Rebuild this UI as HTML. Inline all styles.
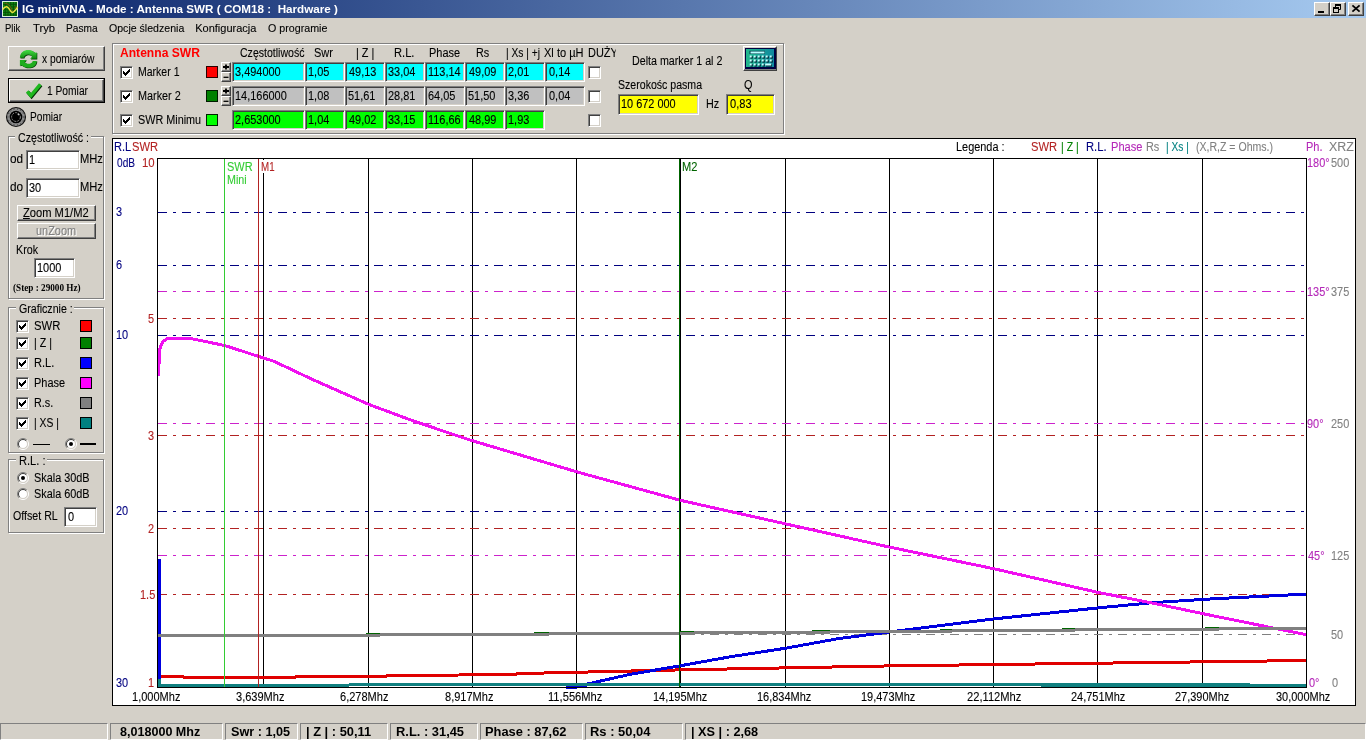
<!DOCTYPE html>
<html lang="pl"><head><meta charset="utf-8"><title>IG miniVNA - Mode : Antenna SWR</title>
<style>
html,body{margin:0;padding:0}
body{width:1366px;height:740px;background:#d4d0c8;position:relative;overflow:hidden;font-family:"Liberation Sans",sans-serif;font-size:12.3px;color:#000}
div,svg{position:absolute;box-sizing:border-box}
.tx{white-space:pre;line-height:16px;height:16px;transform-origin:0 0;-webkit-text-stroke:.1px currentColor}
.b{-webkit-text-stroke:0}
#title{left:0;top:0;width:1366px;height:18px;background:linear-gradient(to right,#0a246a,#a6caf0)}
.rs{background:#d4d0c8;border:1px solid;border-color:#fff #404040 #404040 #fff;box-shadow:inset -1px -1px 0 #808080,inset 1px 1px 0 #d4d0c8}
.sk{border:1px solid;border-color:#808080 #fff #fff #808080;box-shadow:inset 1px 1px 0 #404040,inset -1px -1px 0 #d4d0c8;background:#fff}
.gb{border:1px solid #808080;box-shadow:1px 1px 0 #fff,inset 1px 1px 0 #fff}
.sq{border:1px solid #000;width:12px;height:12px}
.sp{background:#d4d0c8;border:1px solid;border-color:#fff #404040 #404040 #fff;box-shadow:inset -1px -1px 0 #808080;width:10px;height:10px}
.st{top:723px;height:17px;border:1px solid;border-color:#808080 #fff #fff #808080}
</style></head><body>

<div id="title"></div>
<svg style="left:2px;top:1px" width="16" height="16" viewBox="0 0 16 16"><rect x="0" y="0" width="16" height="16" fill="#118a11"/><path d="M3.300 1V15M6 1V15M8.700 1V15M11.400 1V15M14 1V15M1 3.300H15M1 6H15M1 8.700H15M1 11.400H15M1 14H15" stroke="#075207" stroke-width="1"/><rect x=".5" y=".5" width="15" height="15" fill="none" stroke="#d8f0d8"/><path d="M2.200 2.200C5 2 7 3.500 8.500 6S10 10 10.600 10.600M12.800 7.200L14.600 5" fill="none" stroke="#7a5a10" stroke-width="1.100" opacity=".8"/><path d="M.6 8.600C2 6.200 3.300 5.500 4.800 5.700C7 6.200 8 10.500 10 11.400C11.600 12 13.600 9 15.600 6.200" fill="none" stroke="#e8e040" stroke-width="1.500"/></svg>
<div class="rs" style="left:1314px;top:2px;width:16px;height:14px"><svg style="left:0;top:0" width="14" height="12" viewBox="0 0 14 12"><rect x="3" y="8" width="6" height="2" fill="#000"/></svg></div>
<div class="rs" style="left:1330px;top:2px;width:16px;height:14px"><svg style="left:0;top:0" width="14" height="12" viewBox="0 0 14 12"><path d="M4.500 1.500h5v5h-5z" fill="none" stroke="#000"/><rect x="4" y="1" width="6" height="2" fill="#000"/><rect x="2.500" y="4.500" width="5" height="5" fill="#d4d0c8" stroke="#000"/><rect x="2" y="4" width="6" height="2" fill="#000"/></svg></div>
<div class="rs" style="left:1348px;top:2px;width:16px;height:14px"><svg style="left:0;top:0" width="14" height="12" viewBox="0 0 14 12"><path d="M3.400 2.300L10.600 8.700M10.600 2.300L3.400 8.700" stroke="#000" stroke-width="1.800" fill="none"/></svg></div>
<div class="rs" style="left:8px;top:46px;width:97px;height:25px"></div>
<div style="left:8px;top:78px;width:97px;height:25px;border:1px solid #000"><div class="rs" style="left:0;top:0;width:95px;height:23px"></div></div>
<svg style="left:16px;top:47px" width="26" height="24" viewBox="0 0 26 24"><defs><linearGradient id="gg" x1="0" y1="0" x2="0" y2="1"><stop offset="0" stop-color="#44dc44"/><stop offset="1" stop-color="#0f8a0f"/></linearGradient><path id="ra" d="M3.900 10.700C3.900 5.500 8 2.900 12.300 2.900C15 2.900 17.500 4 19 5.800L20.700 5.200V11.700H14.200L16.200 9.500C15.200 8.200 13.800 7.450 12.300 7.450C10 7.450 8 8.800 7.900 10.700Z"/></defs><use href="#ra" transform="translate(.6 .7)" fill="#063806"/><use href="#ra" fill="url(#gg)"/><g transform="translate(0 13) scale(1 .88) translate(0 -13)"><use href="#ra" transform="rotate(180 12.300 12.350) translate(-.6 -.7)" fill="#063806"/><use href="#ra" transform="rotate(180 12.300 12.350)" fill="#1fae1f"/></g></svg>
<svg style="left:20px;top:78px" width="26" height="24" viewBox="0 0 26 24"><path d="M7.200 13.300L10.900 17.600L20.300 6.400" fill="none" stroke="#052f05" stroke-width="3.600" transform="translate(.7 .8)"/><path d="M7.200 13.300L10.900 17.600L20.300 6.400" fill="none" stroke="#1fb81f" stroke-width="3.400"/></svg>
<svg style="left:5px;top:106px" width="22" height="22" viewBox="0 0 22 22"><circle cx="11" cy="11" r="9.500" fill="#8c8c8c" stroke="#111" stroke-width="1.100"/><circle cx="11" cy="11" r="8" fill="none" stroke="#222" stroke-width=".8" stroke-dasharray="1 2.500"/><circle cx="11" cy="11" r="6.300" fill="#000"/><circle cx="11" cy="11" r="4.400" fill="none" stroke="#8a8a8a" stroke-width="1" stroke-dasharray="2.200 1"/><ellipse cx="13.400" cy="8.500" rx="1.100" ry=".6" transform="rotate(40 13.400 8.500)" fill="#ccc"/></svg>
<div class="gb" style="left:8px;top:136px;width:96px;height:163px"></div>
<div class="gb" style="left:8px;top:307px;width:96px;height:146px"></div>
<div class="gb" style="left:8px;top:459px;width:96px;height:74px"></div>
<div class="sk" style="left:26px;top:150px;width:54px;height:20px"></div>
<div class="sk" style="left:26px;top:178px;width:54px;height:20px"></div>
<div class="rs" style="left:17px;top:205px;width:79px;height:16px"></div>
<div class="rs" style="left:17px;top:223px;width:79px;height:16px"></div>
<div class="sk" style="left:34px;top:258px;width:41px;height:20px"></div>
<div class="sk" style="left:64px;top:507px;width:33px;height:20px"></div>
<div class="sk" style="left:16px;top:320px;width:13px;height:13px"><svg style="left:0;top:0" width="11" height="11" viewBox="0 0 11 11" shape-rendering="crispEdges"><rect x="2" y="4" width="1" height="3" fill="#000"/><rect x="3" y="5" width="1" height="3" fill="#000"/><rect x="4" y="6" width="1" height="3" fill="#000"/><rect x="5" y="5" width="1" height="3" fill="#000"/><rect x="6" y="4" width="1" height="3" fill="#000"/><rect x="7" y="3" width="1" height="3" fill="#000"/><rect x="8" y="2" width="1" height="3" fill="#000"/></svg></div>
<div class="sq" style="left:80px;top:320px;background:#ff0000"></div>
<div class="sk" style="left:16px;top:337px;width:13px;height:13px"><svg style="left:0;top:0" width="11" height="11" viewBox="0 0 11 11" shape-rendering="crispEdges"><rect x="2" y="4" width="1" height="3" fill="#000"/><rect x="3" y="5" width="1" height="3" fill="#000"/><rect x="4" y="6" width="1" height="3" fill="#000"/><rect x="5" y="5" width="1" height="3" fill="#000"/><rect x="6" y="4" width="1" height="3" fill="#000"/><rect x="7" y="3" width="1" height="3" fill="#000"/><rect x="8" y="2" width="1" height="3" fill="#000"/></svg></div>
<div class="sq" style="left:80px;top:337px;background:#008000"></div>
<div class="sk" style="left:16px;top:357px;width:13px;height:13px"><svg style="left:0;top:0" width="11" height="11" viewBox="0 0 11 11" shape-rendering="crispEdges"><rect x="2" y="4" width="1" height="3" fill="#000"/><rect x="3" y="5" width="1" height="3" fill="#000"/><rect x="4" y="6" width="1" height="3" fill="#000"/><rect x="5" y="5" width="1" height="3" fill="#000"/><rect x="6" y="4" width="1" height="3" fill="#000"/><rect x="7" y="3" width="1" height="3" fill="#000"/><rect x="8" y="2" width="1" height="3" fill="#000"/></svg></div>
<div class="sq" style="left:80px;top:357px;background:#0000ff"></div>
<div class="sk" style="left:16px;top:377px;width:13px;height:13px"><svg style="left:0;top:0" width="11" height="11" viewBox="0 0 11 11" shape-rendering="crispEdges"><rect x="2" y="4" width="1" height="3" fill="#000"/><rect x="3" y="5" width="1" height="3" fill="#000"/><rect x="4" y="6" width="1" height="3" fill="#000"/><rect x="5" y="5" width="1" height="3" fill="#000"/><rect x="6" y="4" width="1" height="3" fill="#000"/><rect x="7" y="3" width="1" height="3" fill="#000"/><rect x="8" y="2" width="1" height="3" fill="#000"/></svg></div>
<div class="sq" style="left:80px;top:377px;background:#ff00ff"></div>
<div class="sk" style="left:16px;top:397px;width:13px;height:13px"><svg style="left:0;top:0" width="11" height="11" viewBox="0 0 11 11" shape-rendering="crispEdges"><rect x="2" y="4" width="1" height="3" fill="#000"/><rect x="3" y="5" width="1" height="3" fill="#000"/><rect x="4" y="6" width="1" height="3" fill="#000"/><rect x="5" y="5" width="1" height="3" fill="#000"/><rect x="6" y="4" width="1" height="3" fill="#000"/><rect x="7" y="3" width="1" height="3" fill="#000"/><rect x="8" y="2" width="1" height="3" fill="#000"/></svg></div>
<div class="sq" style="left:80px;top:397px;background:#808080"></div>
<div class="sk" style="left:16px;top:417px;width:13px;height:13px"><svg style="left:0;top:0" width="11" height="11" viewBox="0 0 11 11" shape-rendering="crispEdges"><rect x="2" y="4" width="1" height="3" fill="#000"/><rect x="3" y="5" width="1" height="3" fill="#000"/><rect x="4" y="6" width="1" height="3" fill="#000"/><rect x="5" y="5" width="1" height="3" fill="#000"/><rect x="6" y="4" width="1" height="3" fill="#000"/><rect x="7" y="3" width="1" height="3" fill="#000"/><rect x="8" y="2" width="1" height="3" fill="#000"/></svg></div>
<div class="sq" style="left:80px;top:417px;background:#008080"></div>
<svg style="left:17px;top:438px" width="12" height="12" viewBox="0 0 12 12"><circle cx="6" cy="6" r="4.300" fill="#fff"/><path d="M9.900 2.100A5.500 5.500 0 0 0 2.100 9.900" fill="none" stroke="#808080" stroke-width="1"/><path d="M2.100 9.900A5.500 5.500 0 0 0 9.900 2.100" fill="none" stroke="#fff" stroke-width="1"/><path d="M9.200 2.800A4.500 4.500 0 0 0 2.800 9.200" fill="none" stroke="#404040" stroke-width="1"/><path d="M2.800 9.200A4.500 4.500 0 0 0 9.200 2.800" fill="none" stroke="#d4d0c8" stroke-width="1"/></svg>
<svg style="left:65px;top:438px" width="12" height="12" viewBox="0 0 12 12"><circle cx="6" cy="6" r="4.300" fill="#fff"/><path d="M9.900 2.100A5.500 5.500 0 0 0 2.100 9.900" fill="none" stroke="#808080" stroke-width="1"/><path d="M2.100 9.900A5.500 5.500 0 0 0 9.900 2.100" fill="none" stroke="#fff" stroke-width="1"/><path d="M9.200 2.800A4.500 4.500 0 0 0 2.800 9.200" fill="none" stroke="#404040" stroke-width="1"/><path d="M2.800 9.200A4.500 4.500 0 0 0 9.200 2.800" fill="none" stroke="#d4d0c8" stroke-width="1"/><circle cx="6" cy="6" r="2" fill="#000"/></svg>
<div style="left:33px;top:444px;width:17px;height:1px;background:#000"></div>
<div style="left:80px;top:443px;width:16px;height:2px;background:#000"></div>
<svg style="left:17px;top:472px" width="12" height="12" viewBox="0 0 12 12"><circle cx="6" cy="6" r="4.300" fill="#fff"/><path d="M9.900 2.100A5.500 5.500 0 0 0 2.100 9.900" fill="none" stroke="#808080" stroke-width="1"/><path d="M2.100 9.900A5.500 5.500 0 0 0 9.900 2.100" fill="none" stroke="#fff" stroke-width="1"/><path d="M9.200 2.800A4.500 4.500 0 0 0 2.800 9.200" fill="none" stroke="#404040" stroke-width="1"/><path d="M2.800 9.200A4.500 4.500 0 0 0 9.200 2.800" fill="none" stroke="#d4d0c8" stroke-width="1"/><circle cx="6" cy="6" r="2" fill="#000"/></svg>
<svg style="left:17px;top:488px" width="12" height="12" viewBox="0 0 12 12"><circle cx="6" cy="6" r="4.300" fill="#fff"/><path d="M9.900 2.100A5.500 5.500 0 0 0 2.100 9.900" fill="none" stroke="#808080" stroke-width="1"/><path d="M2.100 9.900A5.500 5.500 0 0 0 9.900 2.100" fill="none" stroke="#fff" stroke-width="1"/><path d="M9.200 2.800A4.500 4.500 0 0 0 2.800 9.200" fill="none" stroke="#404040" stroke-width="1"/><path d="M2.800 9.200A4.500 4.500 0 0 0 9.200 2.800" fill="none" stroke="#d4d0c8" stroke-width="1"/></svg>
<div class="gb" style="left:112px;top:43px;width:672px;height:91px"></div>
<div class="sk" style="left:120px;top:66px;width:13px;height:13px"><svg style="left:0;top:0" width="11" height="11" viewBox="0 0 11 11" shape-rendering="crispEdges"><rect x="2" y="4" width="1" height="3" fill="#000"/><rect x="3" y="5" width="1" height="3" fill="#000"/><rect x="4" y="6" width="1" height="3" fill="#000"/><rect x="5" y="5" width="1" height="3" fill="#000"/><rect x="6" y="4" width="1" height="3" fill="#000"/><rect x="7" y="3" width="1" height="3" fill="#000"/><rect x="8" y="2" width="1" height="3" fill="#000"/></svg></div>
<div class="sk" style="left:588px;top:66px;width:13px;height:13px"></div>
<div class="sk" style="left:120px;top:90px;width:13px;height:13px"><svg style="left:0;top:0" width="11" height="11" viewBox="0 0 11 11" shape-rendering="crispEdges"><rect x="2" y="4" width="1" height="3" fill="#000"/><rect x="3" y="5" width="1" height="3" fill="#000"/><rect x="4" y="6" width="1" height="3" fill="#000"/><rect x="5" y="5" width="1" height="3" fill="#000"/><rect x="6" y="4" width="1" height="3" fill="#000"/><rect x="7" y="3" width="1" height="3" fill="#000"/><rect x="8" y="2" width="1" height="3" fill="#000"/></svg></div>
<div class="sk" style="left:588px;top:90px;width:13px;height:13px"></div>
<div class="sk" style="left:120px;top:114px;width:13px;height:13px"><svg style="left:0;top:0" width="11" height="11" viewBox="0 0 11 11" shape-rendering="crispEdges"><rect x="2" y="4" width="1" height="3" fill="#000"/><rect x="3" y="5" width="1" height="3" fill="#000"/><rect x="4" y="6" width="1" height="3" fill="#000"/><rect x="5" y="5" width="1" height="3" fill="#000"/><rect x="6" y="4" width="1" height="3" fill="#000"/><rect x="7" y="3" width="1" height="3" fill="#000"/><rect x="8" y="2" width="1" height="3" fill="#000"/></svg></div>
<div class="sk" style="left:588px;top:114px;width:13px;height:13px"></div>
<div class="sq" style="left:206px;top:66px;background:#ff0000;border-color:#2a0000"></div>
<div class="sq" style="left:206px;top:90px;background:#008000;border-color:#001a00"></div>
<div class="sq" style="left:206px;top:114px;background:#00ff00;border-color:#002000"></div>
<div class="sp" style="left:221px;top:62px"><svg style="left:0;top:0" width="8" height="8"><path d="M1 4h6M4 1.500v5" stroke="#000" stroke-width="1.800"/></svg></div>
<div class="sp" style="left:221px;top:72px"><svg style="left:0;top:0" width="8" height="8"><path d="M1.500 4.300h5" stroke="#000" stroke-width="1.300"/></svg></div>
<div class="sp" style="left:221px;top:86px"><svg style="left:0;top:0" width="8" height="8"><path d="M1 4h6M4 1.500v5" stroke="#000" stroke-width="1.800"/></svg></div>
<div class="sp" style="left:221px;top:96px"><svg style="left:0;top:0" width="8" height="8"><path d="M1.500 4.300h5" stroke="#000" stroke-width="1.300"/></svg></div>
<div class="sk" style="left:232px;top:62px;width:73px;height:20px;background:#00ffff"></div>
<div class="sk" style="left:305px;top:62px;width:40px;height:20px;background:#00ffff"></div>
<div class="sk" style="left:345px;top:62px;width:40px;height:20px;background:#00ffff"></div>
<div class="sk" style="left:385px;top:62px;width:40px;height:20px;background:#00ffff"></div>
<div class="sk" style="left:425px;top:62px;width:40px;height:20px;background:#00ffff"></div>
<div class="sk" style="left:465px;top:62px;width:40px;height:20px;background:#00ffff"></div>
<div class="sk" style="left:505px;top:62px;width:40px;height:20px;background:#00ffff"></div>
<div class="sk" style="left:545px;top:62px;width:40px;height:20px;background:#00ffff"></div>
<div class="sk" style="left:232px;top:86px;width:73px;height:20px;background:#c0c0c0"></div>
<div class="sk" style="left:305px;top:86px;width:40px;height:20px;background:#c0c0c0"></div>
<div class="sk" style="left:345px;top:86px;width:40px;height:20px;background:#c0c0c0"></div>
<div class="sk" style="left:385px;top:86px;width:40px;height:20px;background:#c0c0c0"></div>
<div class="sk" style="left:425px;top:86px;width:40px;height:20px;background:#c0c0c0"></div>
<div class="sk" style="left:465px;top:86px;width:40px;height:20px;background:#c0c0c0"></div>
<div class="sk" style="left:505px;top:86px;width:40px;height:20px;background:#c0c0c0"></div>
<div class="sk" style="left:545px;top:86px;width:40px;height:20px;background:#c0c0c0"></div>
<div class="sk" style="left:232px;top:110px;width:73px;height:20px;background:#00ff00"></div>
<div class="sk" style="left:305px;top:110px;width:40px;height:20px;background:#00ff00"></div>
<div class="sk" style="left:345px;top:110px;width:40px;height:20px;background:#00ff00"></div>
<div class="sk" style="left:385px;top:110px;width:40px;height:20px;background:#00ff00"></div>
<div class="sk" style="left:425px;top:110px;width:40px;height:20px;background:#00ff00"></div>
<div class="sk" style="left:465px;top:110px;width:40px;height:20px;background:#00ff00"></div>
<div class="sk" style="left:505px;top:110px;width:40px;height:20px;background:#00ff00"></div>
<div class="sk" style="left:618px;top:94px;width:81px;height:21px;background:#ffff00"></div>
<div class="sk" style="left:726px;top:94px;width:49px;height:21px;background:#ffff00"></div>
<div class="rs" style="left:743px;top:46px;width:34px;height:25px"></div>
<svg style="left:745px;top:48px" width="31" height="21" viewBox="0 0 31 21"><defs><linearGradient id="cg" x1="0" y1="0" x2="1" y2="0"><stop offset="0" stop-color="#22b88c"/><stop offset="1" stop-color="#0f88a0"/></linearGradient></defs><rect x="0" y="0" width="31" height="21" fill="#000040"/><rect x="1" y="1" width="28" height="18" fill="url(#cg)"/><rect x="4.500" y="2.800" width="15.500" height="3.200" fill="#003848"/><rect x="5.500" y="3.500" width="14" height="2" fill="#b8ffff"/><rect x="5.5" y="8.3" width="2.300" height="2.300" fill="#002838"/><rect x="4.7" y="7.5" width="2" height="2" fill="#c8ffff"/><rect x="9.5" y="8.3" width="2.300" height="2.300" fill="#002838"/><rect x="8.7" y="7.5" width="2" height="2" fill="#c8ffff"/><rect x="13.5" y="8.3" width="2.300" height="2.300" fill="#002838"/><rect x="12.7" y="7.5" width="2" height="2" fill="#c8ffff"/><rect x="17.5" y="8.3" width="2.300" height="2.300" fill="#002838"/><rect x="16.7" y="7.5" width="2" height="2" fill="#c8ffff"/><rect x="21.5" y="8.3" width="2.300" height="2.300" fill="#002838"/><rect x="20.7" y="7.5" width="2" height="2" fill="#c8ffff"/><rect x="25.5" y="8.3" width="2.300" height="2.300" fill="#002838"/><rect x="24.7" y="7.5" width="2" height="2" fill="#c8ffff"/><rect x="5.5" y="12.3" width="2.300" height="2.300" fill="#002838"/><rect x="4.7" y="11.5" width="2" height="2" fill="#c8ffff"/><rect x="9.5" y="12.3" width="2.300" height="2.300" fill="#002838"/><rect x="8.7" y="11.5" width="2" height="2" fill="#c8ffff"/><rect x="13.5" y="12.3" width="2.300" height="2.300" fill="#002838"/><rect x="12.7" y="11.5" width="2" height="2" fill="#c8ffff"/><rect x="17.5" y="12.3" width="2.300" height="2.300" fill="#002838"/><rect x="16.7" y="11.5" width="2" height="2" fill="#c8ffff"/><rect x="21.5" y="12.3" width="2.300" height="2.300" fill="#002838"/><rect x="20.7" y="11.5" width="2" height="2" fill="#c8ffff"/><rect x="25.5" y="12.3" width="2.300" height="2.300" fill="#002838"/><rect x="24.7" y="11.5" width="2" height="2" fill="#c8ffff"/><rect x="5.5" y="16.3" width="2.300" height="2.300" fill="#002838"/><rect x="4.7" y="15.5" width="2" height="2" fill="#c8ffff"/><rect x="9.5" y="16.3" width="2.300" height="2.300" fill="#002838"/><rect x="8.7" y="15.5" width="2" height="2" fill="#c8ffff"/><rect x="13.5" y="16.3" width="2.300" height="2.300" fill="#002838"/><rect x="12.7" y="15.5" width="2" height="2" fill="#c8ffff"/><rect x="17.5" y="16.3" width="2.300" height="2.300" fill="#002838"/><rect x="16.7" y="15.5" width="2" height="2" fill="#c8ffff"/><rect x="21" y="16.300" width="6" height="2.300" fill="#002838"/><rect x="20.200" y="15.500" width="6" height="2" fill="#c8ffff"/></svg>
<div style="left:112px;top:138px;width:1244px;height:568px;background:#fff;border:1px solid #000"></div>
<svg style="left:0;top:0" width="1366" height="740" viewBox="0 0 1366 740">
<g stroke="#000" stroke-width="1" shape-rendering="crispEdges">
<line x1="263.5" y1="158" x2="263.5" y2="688"/>
<line x1="368.5" y1="158" x2="368.5" y2="688"/>
<line x1="472.5" y1="158" x2="472.5" y2="688"/>
<line x1="576.5" y1="158" x2="576.5" y2="688"/>
<line x1="680.5" y1="158" x2="680.5" y2="688"/>
<line x1="785.5" y1="158" x2="785.5" y2="688"/>
<line x1="889.5" y1="158" x2="889.5" y2="688"/>
<line x1="993.5" y1="158" x2="993.5" y2="688"/>
<line x1="1097.5" y1="158" x2="1097.5" y2="688"/>
<line x1="1202.5" y1="158" x2="1202.5" y2="688"/>
</g>
<rect x="261" y="160" width="15" height="13" fill="#fff"/>
<g stroke="#000080" stroke-width="1" stroke-dasharray="9 6 3 6" shape-rendering="crispEdges">
<line x1="158" y1="212.5" x2="1306" y2="212.5"/>
<line x1="158" y1="265.5" x2="1306" y2="265.5"/>
<line x1="158" y1="335.5" x2="1306" y2="335.5"/>
<line x1="158" y1="511.5" x2="1306" y2="511.5"/>
</g>
<g stroke="#b22222" stroke-width="1" stroke-dasharray="9 6 3 6" shape-rendering="crispEdges">
<line x1="158" y1="318.5" x2="1306" y2="318.5"/>
<line x1="158" y1="435.5" x2="1306" y2="435.5"/>
<line x1="158" y1="528.5" x2="1306" y2="528.5"/>
<line x1="158" y1="594.5" x2="1306" y2="594.5"/>
</g>
<g stroke="#cc22cc" stroke-width="1" stroke-dasharray="9 6 3 6" shape-rendering="crispEdges">
<line x1="158" y1="291.5" x2="1306" y2="291.5"/>
<line x1="158" y1="423.5" x2="1306" y2="423.5"/>
<line x1="158" y1="555.5" x2="1306" y2="555.5"/>
</g>
<g stroke="#808080" stroke-width="1" stroke-dasharray="9 6 3 6" shape-rendering="crispEdges">
<line x1="158" y1="634.5" x2="1306" y2="634.5"/>
</g>
<polyline points="160.5,676.5 183.0,676.5 184.0,677.5 295.0,677.5 296.0,676.6 386.0,676.3 387.0,675.5 516.0,674.6 517.0,673.8 540.0,673.1 680.0,669.9 890.0,665.9 1306.0,660.5" fill="none" stroke="#e00000" stroke-width="3" stroke-linejoin="round" shape-rendering="crispEdges" />
<polyline points="159.5,559.0 159.5,686.0" fill="none" stroke="#0000e0" stroke-width="3" stroke-linejoin="round" shape-rendering="crispEdges" />
<polyline points="566.0,687.3 584.0,686.8 587.4,684.0 629.4,674.5 680.0,665.8 729.6,656.9 785.7,648.2 838.0,638.7 889.4,632.0 993.2,619.0 1097.1,608.0 1151.3,602.8 1206.0,599.2 1306.1,594.1" fill="none" stroke="#0000e0" stroke-width="3" stroke-linejoin="round" shape-rendering="crispEdges" />
<polyline points="158.7,375.9 159.4,349.8 162.4,342.3 167.4,338.0 188.5,338.0 224.6,345.5 259.5,356.7 274.4,361.5 311.7,379.1 369.0,404.5 416.3,422.0 471.6,440.5 577.0,471.9 680.3,500.3 785.7,523.9 890.0,547.2 993.2,568.6 1097.1,592.2 1151.3,602.8 1206.0,614.3 1306.1,634.7" fill="none" stroke="#f010f0" stroke-width="3" stroke-linejoin="round" shape-rendering="crispEdges" />
<g shape-rendering="crispEdges">
<rect x="158" y="634" width="222" height="3" fill="#808080"/>
<rect x="366" y="633" width="14" height="1" fill="#006400"/>
<rect x="380" y="633" width="169" height="3" fill="#808080"/>
<rect x="534" y="632" width="15" height="1" fill="#006400"/>
<rect x="549" y="632" width="145" height="3" fill="#808080"/>
<rect x="679" y="631" width="15" height="1" fill="#006400"/>
<rect x="694" y="631" width="136" height="3" fill="#808080"/>
<rect x="812" y="630" width="18" height="1" fill="#006400"/>
<rect x="830" y="630" width="122" height="3" fill="#808080"/>
<rect x="940" y="629" width="12" height="1" fill="#006400"/>
<rect x="952" y="629" width="123" height="3" fill="#808080"/>
<rect x="1062" y="628" width="13" height="1" fill="#006400"/>
<rect x="1075" y="628" width="144" height="3" fill="#808080"/>
<rect x="1205" y="627" width="14" height="1" fill="#006400"/>
<rect x="1219" y="627" width="87" height="3" fill="#808080"/>
</g>
<g shape-rendering="crispEdges" fill="#108080">
<rect x="158" y="679" width="3" height="8"/>
<rect x="158" y="684" width="191" height="3"/>
<rect x="349" y="683" width="692" height="3"/>
<rect x="1041" y="683" width="209" height="4"/>
<rect x="1250" y="684" width="56" height="3"/>
</g>
<g shape-rendering="crispEdges" stroke-width="1"><line x1="224.500" y1="158" x2="224.500" y2="688" stroke="#33cc33"/><line x1="258.500" y1="158" x2="258.500" y2="688" stroke="#b22222"/><line x1="679.500" y1="158" x2="679.500" y2="688" stroke="#006400"/></g>
<rect x="157.500" y="158.500" width="1149" height="529" fill="none" stroke="#000" stroke-width="1" shape-rendering="crispEdges"/>
</svg>
<div class="st" style="left:0px;width:108px"></div>
<div class="st" style="left:110px;width:113px"></div>
<div class="st" style="left:225px;width:73px"></div>
<div class="st" style="left:300px;width:88px"></div>
<div class="st" style="left:390px;width:88px"></div>
<div class="st" style="left:480px;width:103px"></div>
<div class="st" style="left:585px;width:98px"></div>
<div class="st" style="left:685px;width:681px"></div>
<div id="tl" style="left:0;top:0;width:1366px;height:740px;will-change:transform">
<div class="tx b" style="left:21.74px;top:1px;transform:scaleX(1.060);font-size:11px;font-weight:700;color:#fff;">IG miniVNA - Mode : Antenna SWR ( COM18 :  Hardware )</div>
<div class="tx" style="left:5.04px;top:20px;transform:scaleX(0.859);font-size:11px;">Plik</div>
<div class="tx" style="left:32.80px;top:20px;transform:scaleX(1.019);font-size:11px;">Tryb</div>
<div class="tx" style="left:65.88px;top:20px;transform:scaleX(0.921);font-size:11px;">Pasma</div>
<div class="tx" style="left:108.84px;top:20px;transform:scaleX(0.962);font-size:11px;">Opcje śledzenia</div>
<div class="tx" style="left:195.20px;top:20px;font-size:11px;">Konfiguracja</div>
<div class="tx" style="left:267.83px;top:20px;transform:scaleX(0.972);font-size:11px;">O programie</div>
<div class="tx" style="left:41.60px;top:51px;transform:scaleX(0.832);">x pomiarów</div>
<div class="tx" style="left:47.27px;top:83px;transform:scaleX(0.833);">1 Pomiar</div>
<div class="tx" style="left:29.78px;top:109px;transform:scaleX(0.824);">Pomiar</div>
<div style="left:15.3px;top:136px;width:76.2px;height:2px;background:#d4d0c8"></div>
<div class="tx" style="left:18.44px;top:130px;transform:scaleX(0.865);">Częstotliwość :</div>
<div class="tx" style="left:9.94px;top:151px;transform:scaleX(0.958);">od</div>
<div class="tx" style="left:28.91px;top:152px;transform:scaleX(0.890);">1</div>
<div class="tx" style="left:80.49px;top:151px;transform:scaleX(0.908);">MHz</div>
<div class="tx" style="left:9.94px;top:179px;transform:scaleX(0.958);">do</div>
<div class="tx" style="left:28.91px;top:180px;transform:scaleX(0.890);">30</div>
<div class="tx" style="left:80.49px;top:179px;transform:scaleX(0.908);">MHz</div>
<div class="tx" style="left:23.00px;top:205px;transform:scaleX(0.907);"><u>Z</u>oom M1/M2</div>
<div class="tx" style="left:37.11px;top:224px;transform:scaleX(0.888);color:#fff;">unZoom</div>
<div class="tx" style="left:36.11px;top:223px;transform:scaleX(0.888);color:#808080;">unZoom</div>
<div class="tx" style="left:15.93px;top:242px;transform:scaleX(0.871);">Krok</div>
<div class="tx" style="left:37.01px;top:260px;transform:scaleX(0.890);">1000</div>
<div class="tx b" style="left:12.80px;top:280px;transform:scaleX(0.875);font-size:10.5px;font-weight:700;font-family:'Liberation Serif',serif;">(Step : 29000 Hz)</div>
<div style="left:15.6px;top:307px;width:58.9px;height:2px;background:#d4d0c8"></div>
<div class="tx" style="left:18.74px;top:301px;transform:scaleX(0.865);">Graficznie :</div>
<div class="tx" style="left:33.68px;top:318px;transform:scaleX(0.919);">SWR</div>
<div class="tx" style="left:33.74px;top:335px;transform:scaleX(0.863);">| Z |</div>
<div class="tx" style="left:33.70px;top:355px;transform:scaleX(0.900);">R.L.</div>
<div class="tx" style="left:33.71px;top:375px;transform:scaleX(0.891);">Phase</div>
<div class="tx" style="left:33.72px;top:395px;transform:scaleX(0.880);">R.s.</div>
<div class="tx" style="left:33.76px;top:415px;transform:scaleX(0.843);">| XS |</div>
<div style="left:15.6px;top:459px;width:31.4px;height:2px;background:#d4d0c8"></div>
<div class="tx" style="left:18.70px;top:453px;transform:scaleX(0.904);">R.L. :</div>
<div class="tx" style="left:33.72px;top:470px;transform:scaleX(0.884);">Skala 30dB</div>
<div class="tx" style="left:33.72px;top:486px;transform:scaleX(0.884);">Skala 60dB</div>
<div class="tx" style="left:12.84px;top:508px;transform:scaleX(0.865);">Offset RL</div>
<div class="tx" style="left:67.80px;top:509px;transform:scaleX(0.890);">0</div>
<div class="tx b" style="left:120.00px;top:45px;transform:scaleX(0.983);font-weight:700;color:#ff0000;">Antenna SWR</div>
<div class="tx" style="left:137.74px;top:64px;transform:scaleX(0.855);">Marker 1</div>
<div class="tx" style="left:137.72px;top:88px;transform:scaleX(0.881);">Marker 2</div>
<div class="tx" style="left:137.72px;top:112px;transform:scaleX(0.880);">SWR Minimu</div>
<div class="tx" style="left:239.74px;top:45px;transform:scaleX(0.858);">Częstotliwość</div>
<div class="tx" style="left:313.61px;top:45px;transform:scaleX(0.895);">Swr</div>
<div class="tx" style="left:355.82px;top:45px;transform:scaleX(0.884);">| Z |</div>
<div class="tx" style="left:393.60px;top:45px;transform:scaleX(0.905);">R.L.</div>
<div class="tx" style="left:428.81px;top:45px;transform:scaleX(0.891);">Phase</div>
<div class="tx" style="left:475.82px;top:45px;transform:scaleX(0.879);">Rs</div>
<div class="tx" style="left:506.07px;top:45px;transform:scaleX(0.831);">| Xs | +j</div>
<div class="tx" style="left:543.80px;top:45px;transform:scaleX(0.898);">Xl to µH</div>
<div class="tx" style="left:588.11px;top:45px;transform:scaleX(0.890);width:30.66px;overflow:hidden;">DUŻY</div>
<div class="tx" style="left:234.61px;top:64px;transform:scaleX(0.890);">3,494000</div>
<div class="tx" style="left:307.61px;top:64px;transform:scaleX(0.890);">1,05</div>
<div class="tx" style="left:348.50px;top:64px;transform:scaleX(0.890);">49,13</div>
<div class="tx" style="left:387.61px;top:64px;transform:scaleX(0.890);">33,04</div>
<div class="tx" style="left:427.61px;top:64px;transform:scaleX(0.890);">113,14</div>
<div class="tx" style="left:468.50px;top:64px;transform:scaleX(0.890);">49,09</div>
<div class="tx" style="left:507.61px;top:64px;transform:scaleX(0.890);">2,01</div>
<div class="tx" style="left:548.50px;top:64px;transform:scaleX(0.890);">0,14</div>
<div class="tx" style="left:234.61px;top:88px;transform:scaleX(0.890);">14,166000</div>
<div class="tx" style="left:307.61px;top:88px;transform:scaleX(0.890);">1,08</div>
<div class="tx" style="left:347.61px;top:88px;transform:scaleX(0.890);">51,61</div>
<div class="tx" style="left:387.61px;top:88px;transform:scaleX(0.890);">28,81</div>
<div class="tx" style="left:427.61px;top:88px;transform:scaleX(0.890);">64,05</div>
<div class="tx" style="left:467.61px;top:88px;transform:scaleX(0.890);">51,50</div>
<div class="tx" style="left:507.61px;top:88px;transform:scaleX(0.890);">3,36</div>
<div class="tx" style="left:548.50px;top:88px;transform:scaleX(0.890);">0,04</div>
<div class="tx" style="left:234.61px;top:112px;transform:scaleX(0.890);">2,653000</div>
<div class="tx" style="left:307.61px;top:112px;transform:scaleX(0.890);">1,04</div>
<div class="tx" style="left:348.50px;top:112px;transform:scaleX(0.890);">49,02</div>
<div class="tx" style="left:387.61px;top:112px;transform:scaleX(0.890);">33,15</div>
<div class="tx" style="left:427.61px;top:112px;transform:scaleX(0.890);">116,66</div>
<div class="tx" style="left:468.50px;top:112px;transform:scaleX(0.890);">48,99</div>
<div class="tx" style="left:507.61px;top:112px;transform:scaleX(0.890);">1,93</div>
<div class="tx" style="left:631.73px;top:53px;transform:scaleX(0.870);">Delta marker 1 al 2</div>
<div class="tx" style="left:617.84px;top:77px;transform:scaleX(0.860);">Szerokośc pasma</div>
<div class="tx" style="left:744.01px;top:77px;transform:scaleX(0.890);">Q</div>
<div class="tx" style="left:621.01px;top:96px;transform:scaleX(0.887);">10 672 000</div>
<div class="tx" style="left:705.72px;top:96px;transform:scaleX(0.879);">Hz</div>
<div class="tx" style="left:730.00px;top:96px;transform:scaleX(0.900);">0,83</div>
<div class="tx" style="left:113.90px;top:139px;transform:scaleX(0.900);color:#000080;">R.L</div>
<div class="tx" style="left:131.79px;top:139px;transform:scaleX(0.907);color:#b22222;">SWR</div>
<div class="tx" style="left:116.80px;top:155px;transform:scaleX(0.824);color:#000080;">0dB</div>
<div class="tx" style="left:141.97px;top:155px;transform:scaleX(0.925);color:#b22222;">10</div>
<div class="tx" style="left:115.81px;top:204px;transform:scaleX(0.890);color:#000080;">3</div>
<div class="tx" style="left:115.81px;top:257px;transform:scaleX(0.890);color:#000080;">6</div>
<div class="tx" style="left:115.81px;top:327px;transform:scaleX(0.890);color:#000080;">10</div>
<div class="tx" style="left:115.81px;top:503px;transform:scaleX(0.890);color:#000080;">20</div>
<div class="tx" style="left:115.81px;top:675px;transform:scaleX(0.890);color:#000080;">30</div>
<div class="tx" style="left:147.91px;top:311px;transform:scaleX(0.890);color:#b22222;">5</div>
<div class="tx" style="left:147.91px;top:428px;transform:scaleX(0.890);color:#b22222;">3</div>
<div class="tx" style="left:147.91px;top:521px;transform:scaleX(0.890);color:#b22222;">2</div>
<div class="tx" style="left:139.61px;top:587px;transform:scaleX(0.890);color:#b22222;">1.5</div>
<div class="tx" style="left:148.41px;top:675px;transform:scaleX(0.890);color:#b22222;">1</div>
<div class="tx" style="left:227.01px;top:159px;transform:scaleX(0.893);color:#33cc33;">SWR</div>
<div class="tx" style="left:227.03px;top:172px;transform:scaleX(0.871);color:#33cc33;">Mini</div>
<div class="tx" style="left:261.21px;top:159px;transform:scaleX(0.794);color:#b22222;">M1</div>
<div class="tx" style="left:681.90px;top:159px;transform:scaleX(0.900);color:#006400;">M2</div>
<div class="tx" style="left:955.61px;top:139px;transform:scaleX(0.887);">Legenda :</div>
<div class="tx" style="left:1030.59px;top:139px;transform:scaleX(0.907);color:#b22222;">SWR</div>
<div class="tx" style="left:1061.05px;top:139px;transform:scaleX(0.853);color:#008000;">| Z |</div>
<div class="tx" style="left:1085.59px;top:139px;transform:scaleX(0.910);color:#000080;">R.L.</div>
<div class="tx" style="left:1110.60px;top:139px;transform:scaleX(0.902);color:#b428b8;">Phase</div>
<div class="tx" style="left:1145.71px;top:139px;transform:scaleX(0.886);color:#808080;">Rs</div>
<div class="tx" style="left:1165.67px;top:139px;transform:scaleX(0.827);color:#008080;">| Xs |</div>
<div class="tx" style="left:1195.74px;top:139px;transform:scaleX(0.857);color:#808080;">(X,R,Z = Ohms.)</div>
<div class="tx" style="left:1305.91px;top:139px;transform:scaleX(0.894);color:#b428b8;">Ph.</div>
<div class="tx" style="left:1328.79px;top:139px;transform:scaleX(1.009);color:#808080;">XRZ</div>
<div class="tx" style="left:1307.31px;top:155px;transform:scaleX(0.890);color:#b428b8;">180°</div>
<div class="tx" style="left:1307.31px;top:284px;transform:scaleX(0.890);color:#b428b8;">135°</div>
<div class="tx" style="left:1307.31px;top:416px;transform:scaleX(0.890);color:#b428b8;">90°</div>
<div class="tx" style="left:1308.20px;top:548px;transform:scaleX(0.890);color:#b428b8;">45°</div>
<div class="tx" style="left:1308.90px;top:675px;transform:scaleX(0.890);color:#b428b8;">0°</div>
<div class="tx" style="left:1330.91px;top:155px;transform:scaleX(0.890);color:#808080;">500</div>
<div class="tx" style="left:1330.91px;top:284px;transform:scaleX(0.890);color:#808080;">375</div>
<div class="tx" style="left:1330.91px;top:416px;transform:scaleX(0.890);color:#808080;">250</div>
<div class="tx" style="left:1330.91px;top:548px;transform:scaleX(0.890);color:#808080;">125</div>
<div class="tx" style="left:1330.91px;top:627px;transform:scaleX(0.890);color:#808080;">50</div>
<div class="tx" style="left:1332.00px;top:675px;transform:scaleX(0.890);color:#808080;">0</div>
<div class="tx" style="left:132.30px;top:689px;transform:scaleX(0.896);">1,000Mhz</div>
<div class="tx" style="left:235.70px;top:689px;transform:scaleX(0.896);">3,639Mhz</div>
<div class="tx" style="left:340.20px;top:689px;transform:scaleX(0.896);">6,278Mhz</div>
<div class="tx" style="left:444.50px;top:689px;transform:scaleX(0.896);">8,917Mhz</div>
<div class="tx" style="left:548.39px;top:689px;transform:scaleX(0.907);">11,556Mhz</div>
<div class="tx" style="left:653.31px;top:689px;transform:scaleX(0.892);">14,195Mhz</div>
<div class="tx" style="left:756.91px;top:689px;transform:scaleX(0.892);">16,834Mhz</div>
<div class="tx" style="left:861.11px;top:689px;transform:scaleX(0.892);">19,473Mhz</div>
<div class="tx" style="left:966.59px;top:689px;transform:scaleX(0.907);">22,112Mhz</div>
<div class="tx" style="left:1070.51px;top:689px;transform:scaleX(0.892);">24,751Mhz</div>
<div class="tx" style="left:1175.31px;top:689px;transform:scaleX(0.892);">27,390Mhz</div>
<div class="tx" style="left:1275.71px;top:689px;transform:scaleX(0.892);">30,000Mhz</div>
<div class="tx b" style="left:120.40px;top:724px;transform:scaleX(1.021);font-weight:700;">8,018000 Mhz</div>
<div class="tx b" style="left:230.77px;top:724px;transform:scaleX(1.029);font-weight:700;">Swr : 1,05</div>
<div class="tx b" style="left:306.15px;top:724px;transform:scaleX(1.046);font-weight:700;">| Z | : 50,11</div>
<div class="tx b" style="left:395.95px;top:724px;transform:scaleX(1.048);font-weight:700;">R.L. : 31,45</div>
<div class="tx b" style="left:485.26px;top:724px;transform:scaleX(1.045);font-weight:700;">Phase : 87,62</div>
<div class="tx b" style="left:590.35px;top:724px;transform:scaleX(1.052);font-weight:700;">Rs : 50,04</div>
<div class="tx b" style="left:691.27px;top:724px;transform:scaleX(1.033);font-weight:700;">| XS | : 2,68</div>
</div>
</body></html>
